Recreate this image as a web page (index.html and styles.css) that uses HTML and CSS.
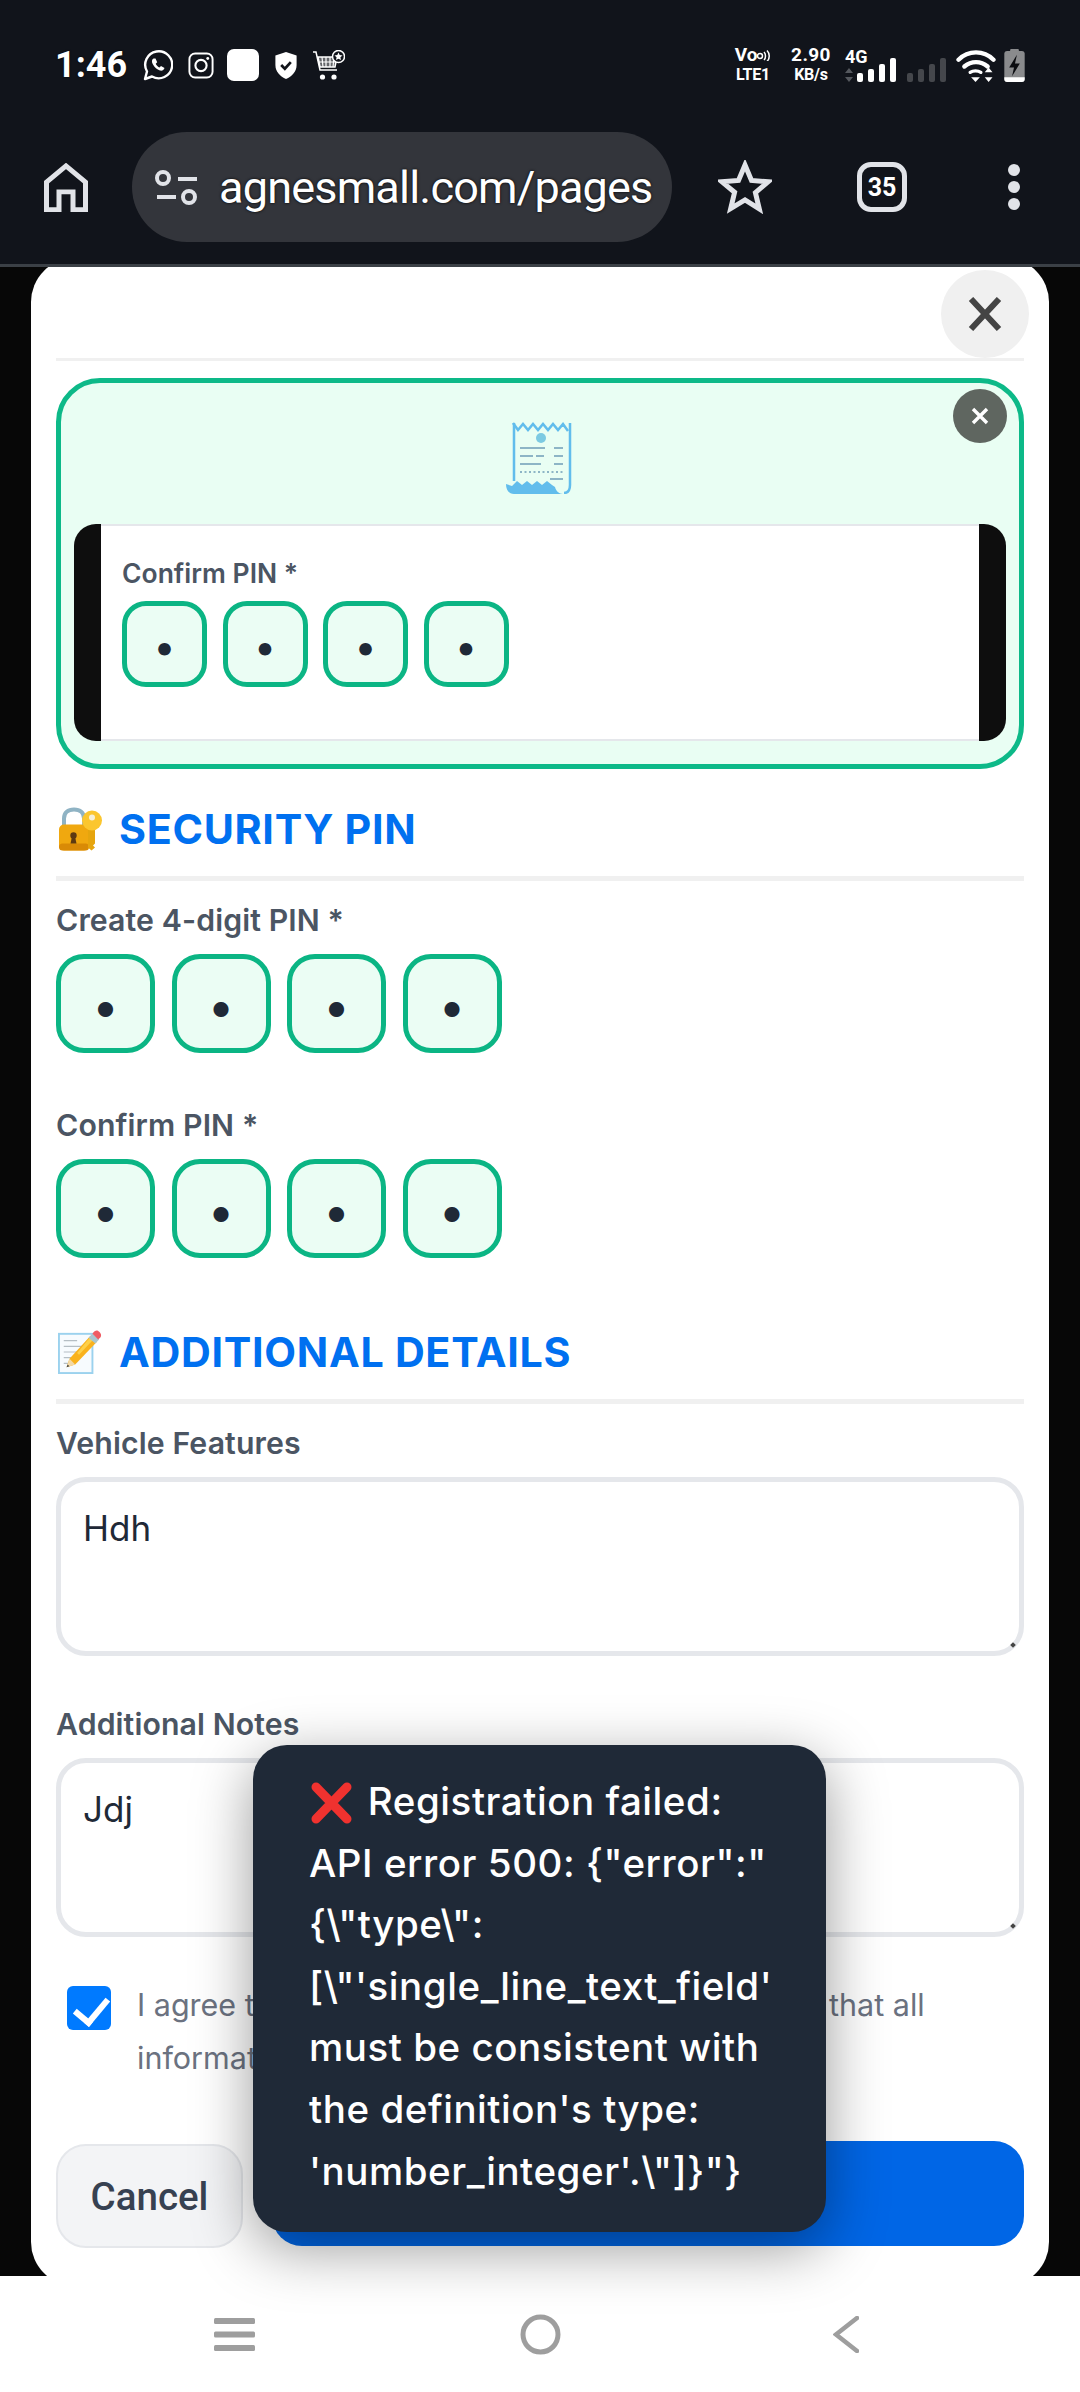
FILE: index.html
```html
<!DOCTYPE html>
<html lang="en">
<head>
    <meta charset="UTF-8">
    <meta name="viewport" content="width=device-width, initial-scale=1.0">
    <title>Registration</title>
    <link rel="stylesheet" href="styles.css">
</head>
<body>
<div class="phone">
    <div class="chrome">
        <div class="status">
            <span class="time">1:46</span>
            <svg class="ic-whatsapp" viewBox="0 0 30 31" fill="none" stroke="#fff" stroke-width="2.4"><path d="M2 29l2-7.5A13.5 13.5 0 1 1 9 26.500z" stroke-linejoin="round"/><path d="M10.500 8.500c-2 1-2 3.500-.5 6 1.500 2.800 4 5 7 6 2 .5 4-.5 4.500-2.500l-3.500-2-1.500 1.500c-1.500-.7-3-2.200-3.800-3.800l1.500-1.500-1.700-3.700z" fill="#fff" stroke="none"/></svg>
            <svg class="ic-insta" viewBox="0 0 26 28" fill="none" stroke="#fff" stroke-width="2"><rect x="1" y="1.500" width="24" height="25" rx="6"/><circle cx="13" cy="14" r="5.800" stroke-width="2.200"/><circle cx="20" cy="6.800" r="1.500" fill="#fff" stroke="none"/></svg>
            <span class="app-square"></span>
            <svg class="ic-shield" viewBox="0 0 22 28"><path d="M11 0l11 3.500v10c0 7-5 12-11 14.500C5 25.500 0 20.500 0 13.500v-10z" fill="#fff"/><path d="M6 13.500l3.800 3.800L16 10.500" fill="none" stroke="#11141b" stroke-width="2.800"/></svg>
            <svg class="ic-cart" viewBox="0 0 32 30" fill="none" stroke="#fff"><path d="M0 2h3l4 18h17" stroke-width="1.500"/><path d="M5 7h19l-2 10H7z" fill="#fff" fill-opacity=".35" stroke-width="1.500"/><path d="M9 7l1 10M13 7v10M17 7v10M21 7l-1 10M6 12h17" stroke-width="1.200"/><circle cx="9.500" cy="27" r="2.600" fill="#fff" stroke="none"/><circle cx="21" cy="27" r="2.600" fill="#fff" stroke="none"/><circle cx="25.500" cy="6.500" r="6" fill="#11141b" stroke-width="1.500"/><path d="M25.500 2.500l1.200 2.600 2.800.3-2.100 1.900.6 2.800-2.500-1.400-2.500 1.400.6-2.800-2.100-1.900 2.800-.3z" fill="#fff" stroke="none"/></svg>
            <span class="status-gap"></span>
            <div class="net-type"><span class="volte">Vo<svg viewBox="0 0 14 12" fill="none" stroke="#fff" stroke-width="1.500"><circle cx="3" cy="7" r="2.500"/><path d="M7 3c2 2 2 6 0 8M10 1.500c3 3 3 8 0 11"/></svg></span><span>LTE1</span></div>
            <div class="net-speed"><span class="speed-num">2.90</span><span>KB/s</span></div>
            <div class="signal-wrap">
                <span class="four-g">4G</span>
                <svg class="arrows" viewBox="0 0 8 14" fill="#55585e"><path d="M4 0l4 5H0zM4 14L0 9h8z"/></svg>
                <div class="bars"><i class="b1"></i><i class="b2"></i><i class="b3"></i><i class="b4"></i></div>
            </div>
            <div class="bars dim"><i class="b1"></i><i class="b2"></i><i class="b3"></i><i class="b4"></i></div>
            <svg class="ic-wifi" viewBox="0 0 40 34" fill="none" stroke="#fff" stroke-width="4.500" stroke-linecap="round"><path d="M2 11c10-10 26-10 36 0"/><path d="M8 18c7-6 17-6 24 0"/><path d="M14 24c3-2 8-2 11 0" stroke-width="3.500"/><path d="M15 29h9l-4.500 5z" fill="#fff" stroke="none"/><path d="M33 19l4 5h-8zM33 34l-4-5h8z" fill="#fff" stroke="none"/></svg>
            <svg class="ic-batt" viewBox="0 0 21 34"><rect x="0" y="2" width="21" height="32" rx="3" fill="#8a8b8d"/><rect x="6" y="0" width="9" height="3" rx="1" fill="#8a8b8d"/><path d="M0 29h21v2a3 3 0 0 1-3 3H3a3 3 0 0 1-3-3z" fill="#fff"/><path d="M13 6l-8 13h5l-2 9 8-13h-5z" fill="#0b0c10"/></svg>
        </div>
        <div class="toolbar">
            <svg class="ic-home" viewBox="0 0 44 51" preserveAspectRatio="none" fill="none" stroke="#e1e3e8" stroke-width="5"><path d="M2.500 48.500V20L22 3l19.500 17v28.500H29V30H15v18.500z"/></svg>
            <div class="url-pill">
                <svg class="ic-tune" viewBox="0 0 42 35" fill="none" stroke="#e1e3e8" stroke-width="4"><circle cx="8" cy="8" r="6"/><path d="M23 9h19M2 27h19"/><circle cx="34" cy="27" r="6"/></svg>
                <span class="url">agnesmall.com/pages</span>
            </div>
            <svg class="ic-star" viewBox="0 0 54 54" fill="none" stroke="#e1e3e8" stroke-width="5"><path d="M27 5l6.500 15.500 16.500 1.300-12.600 10.800 3.900 16.300L27 39.900l-14.300 8.700 3.900-16.300L4 21.800l16.500-1.300z"/></svg>
            <div class="tabs">35</div>
            <div class="dots"><i></i><i></i><i></i></div>
        </div>
    </div>

    <div class="backdrop">
        <div class="card">
            <div class="card-head">
                <button class="close-btn">
                    <svg viewBox="0 0 34 34" stroke="#444" stroke-width="6"><path d="M3 2l28 30M31 2L3 32"/></svg>
                </button>
            </div>

            <div class="scan-box">
                <button class="scan-close">
                    <svg viewBox="0 0 18 18" stroke="#fff" stroke-width="3.400"><path d="M2 2l14 14M16 2L2 16"/></svg>
                </button>
                <svg class="receipt" viewBox="0 0 66 72" fill="none">
                    <path d="M8 1v58M64 1v62c0 5-2 8-6 8" stroke="#62bdec" stroke-width="2.500"/>
                    <path d="M7 1l5 7 5-6 5 6 5-6 5 6 5-6 5 6 5-6 5 6 5-6 5 7" stroke="#62bdec" stroke-width="2.500"/>
                    <path d="M0 62l6 2 5-5 5 4 5-4 5 4 5-4 5 4 5-4 5 4 3 2c1 4 4 7 8 7H8c-5 0-8-4-8-10z" fill="#62bdec"/>
                    <circle cx="35" cy="16" r="5" fill="#7ccae2"/>
                    <path d="M14 26h25M48 26h9M14 34h13M30 34h8M48 34h9M14 42h21M48 42h9M44 57h13" stroke="#8db5c6" stroke-width="2"/>
                    <path d="M14 50h44" stroke="#8db5c6" stroke-width="2" stroke-dasharray="2 2.500"/>
                </svg>
                <div class="scan-shot">
                    <div class="scan-page">
                        <div class="scan-label">Confirm PIN *</div>
                        <div class="pin-row small">
                            <div class="pin">•</div><div class="pin">•</div><div class="pin">•</div><div class="pin">•</div>
                        </div>
                    </div>
                </div>
            </div>

            <h3 class="section-title first">
                <svg class="emoji" viewBox="0 0 44 43"><path d="M6 19V11C6 5 10 2 16 2s10 3 10 9v8" fill="none" stroke="#8fb3c4" stroke-width="4"/><rect x="1" y="17" width="30" height="26" rx="5" fill="#f0a80f"/><rect x="1" y="36" width="30" height="7" rx="3.500" fill="#d98a06"/><circle cx="15.500" cy="28" r="3.200" fill="#5d3a12"/><path d="M14 29h3l1.500 7h-6z" fill="#5d3a12"/><path d="M30 20h7v16l-2 2 2 2-3.500 3-3.500-3z" fill="#e6a50e"/><circle cx="34" cy="13" r="10" fill="#fbc62e"/><circle cx="34" cy="10" r="3" fill="#f6f0d8"/></svg>
                SECURITY PIN
            </h3>

            <label class="field-label">Create 4-digit PIN *</label>
            <div class="pin-row">
                <div class="pin">•</div><div class="pin">•</div><div class="pin">•</div><div class="pin">•</div>
            </div>

            <label class="field-label spaced">Confirm PIN *</label>
            <div class="pin-row">
                <div class="pin">•</div><div class="pin">•</div><div class="pin">•</div><div class="pin">•</div>
            </div>

            <h3 class="section-title">
                <svg class="emoji" viewBox="0 0 46 46"><rect x="1" y="4" width="35" height="41" fill="#f7fbfe" stroke="#9bd2ee" stroke-width="2"/><path d="M6 11h14M6 17h22M6 23h20M6 29h13M6 35h9" stroke="#b5bec4" stroke-width="1.300"/><path d="M9 39l3-9L34 6l7 6-23 24z" fill="#f9b21d"/><path d="M20 24l14-17 3 3-15 16z" fill="#fdd04a"/><path d="M9 39l3-9 6 6z" fill="#f3d9a6"/><path d="M9 39l1-3 2 2z" fill="#444"/><path d="M32 8l4-4 7 6-4 4z" fill="#a9c6cf"/><path d="M36 4c2-3 4-4 6-3 3 2 4 5 2 7l-2 2z" fill="#ef5b62"/></svg>
                ADDITIONAL DETAILS
            </h3>

            <label class="field-label">Vehicle Features</label>
            <div class="area-wrap"><textarea class="area">Hdh</textarea></div>

            <label class="field-label notes">Additional Notes</label>
            <div class="area-wrap"><textarea class="area">Jdj</textarea></div>

            <div class="agree">
                <input type="checkbox" class="agree-box" checked>
                <span class="agree-text">I agree to the terms and conditions and confirm that all information provided is accurate</span>
            </div>

            <div class="actions">
                <button class="btn-cancel">Cancel</button>
                <button class="btn-submit">Register</button>
            </div>
        </div>
    </div>

    <div class="navbar">
        <svg class="nav-menu" viewBox="0 0 41 33" fill="#9e9e9e"><rect width="41" height="6" rx="1.500"/><rect y="13.500" width="41" height="6" rx="1.500"/><rect y="27" width="41" height="6" rx="1.500"/></svg>
        <svg class="nav-home" viewBox="0 0 41 41" fill="none" stroke="#9e9e9e" stroke-width="5"><circle cx="20.500" cy="20.500" r="17.500"/></svg>
        <svg class="nav-back" viewBox="0 0 26 37" fill="none" stroke="#9e9e9e" stroke-width="4.500" stroke-linecap="round"><path d="M24 2L3 18.500 24 35"/></svg>
    </div>

    <div class="toast">
        <svg class="toast-x" viewBox="0 0 45 42" stroke="#f0322f" stroke-width="9" stroke-linecap="round"><path d="M7 5l31 32M38 5L7 37"/></svg> Registration failed:<br>API error 500: {"error":"<br>{\"type\":<br>[\"'single_line_text_field'<br>must be consistent with<br>the definition's type:<br>'number_integer'.\"]}"}
    </div>
</div>
</body>
</html>
```

FILE: styles.css
```css
* {
    box-sizing: border-box;
}

body {
    margin: 0;
    font-family: Inter, "Noto Sans", sans-serif;
    background-color: #000;
}

.phone {
    position: relative;
    width: 1080px;
    height: 2392px;
    display: flex;
    flex-direction: column;
    overflow: hidden;
}

/* phone status bar + browser toolbar */
.chrome {
    background-color: #11141b;
    border-bottom: 3px solid #3b4046;
    flex: none;
}

.status {
    height: 130px;
    display: flex;
    align-items: center;
    padding: 0 55px 0 55px;
    color: #fff;
    font-family: Roboto, sans-serif;
}

.time {
    font-size: 36px;
    font-weight: 700;
    width: 88px;
    text-shadow: 0 0 2px #000;
}

.ic-whatsapp { width: 30px; height: 31px; margin-right: 15px; }
.ic-insta { width: 26px; height: 27px; margin-right: 13px; }
.app-square { width: 32px; height: 32px; background-color: #fff; border-radius: 7px; margin-right: 16px; }
.ic-shield { width: 22px; height: 27px; margin-right: 16px; }
.ic-cart { width: 32px; height: 30px; }
.status-gap { flex: 1; }

.net-type, .net-speed {
    display: flex;
    flex-direction: column;
    align-items: center;
    font-size: 16px;
    font-weight: 700;
    line-height: 20px;
    letter-spacing: -.2px;
}

.net-type { width: 42px; margin-right: 16px; }
.net-type .volte { display: flex; align-items: center; font-size: 19px; }
.net-type .volte svg { width: 14px; height: 12px; }
.net-speed { width: 42px; margin-right: 13px; }
.speed-num { font-size: 19px; letter-spacing: .4px; }

.signal-wrap {
    position: relative;
    width: 51px;
    height: 33px;
    display: flex;
    align-items: flex-end;
    justify-content: space-between;
    margin-right: 11px;
}

.four-g { position: absolute; left: 0; top: 0; font-size: 18px; font-weight: 700; line-height: 16px; }
.arrows { width: 8px; height: 14px; }

.bars {
    display: flex;
    align-items: flex-end;
    gap: 5px;
    height: 24px;
}

.bars i { display: block; width: 6px; background-color: #fff; border-radius: 2px; }
.bars .b1 { height: 9px; }
.bars .b2 { height: 13px; }
.bars .b3 { height: 18px; }
.bars .b4 { height: 24px; }
.bars.dim { margin-right: 10px; height: 33px; }
.bars.dim i { background-color: #45474c; }

.ic-wifi { width: 40px; height: 33px; margin-right: 8px; }
.ic-batt { width: 21px; height: 33px; }

.toolbar {
    height: 134px;
    display: flex;
    align-items: center;
    padding: 0 60px 20px 44px;
}

.ic-home { width: 44px; height: 49px; margin-right: 44px; }

.url-pill {
    width: 540px;
    height: 110px;
    border-radius: 55px;
    background-color: #33353b;
    display: flex;
    align-items: center;
    padding-left: 23px;
    margin-right: 46px;
}

.ic-tune { width: 42px; height: 35px; margin-right: 22px; }

.url {
    font-family: Roboto, sans-serif;
    font-size: 45px;
    letter-spacing: -.8px;
    color: #fff;
    white-space: nowrap;
    text-shadow: 0 0 3px #000;
}

.ic-star { width: 54px; height: 54px; margin-right: 85px; }

.tabs {
    width: 50px;
    height: 50px;
    border: 5px solid #e1e3e8;
    border-radius: 14px;
    color: #fff;
    font-family: Roboto, sans-serif;
    font-size: 25px;
    font-weight: 700;
    display: flex;
    align-items: center;
    justify-content: center;
    margin-right: 101px;
}

.dots {
    display: flex;
    flex-direction: column;
    gap: 5px;
}

.dots i {
    display: block;
    width: 12px;
    height: 12px;
    border-radius: 50%;
    background-color: #e1e3e8;
}

/* modal */
.backdrop {
    flex: 1;
    min-height: 0;
    background-color: #070707;
    overflow: hidden;
}

.card {
    background-color: #fff;
    margin: -9px 31px 0;
    height: 2028px;
    border-radius: 44px;
    padding: 12px 25px 0;
}

.card-head {
    display: flex;
    justify-content: flex-end;
    border-bottom: 3px solid #f0f0f0;
    height: 91px;
    margin-bottom: 17px;
}

.close-btn {
    width: 88px;
    height: 88px;
    flex: none;
    border: none;
    border-radius: 50%;
    background-color: #f0f0f0;
    margin-right: -5px;
    padding: 0;
    display: flex;
    align-items: center;
    justify-content: center;
}

.close-btn svg { width: 34px; height: 34px; }

.scan-box {
    position: relative;
    height: 391px;
    border: 5px solid #0db988;
    border-radius: 44px;
    background-color: #e9fef3;
    padding: 39px 13px 0;
}

.scan-close {
    position: absolute;
    top: 6px;
    right: 12px;
    width: 54px;
    height: 54px;
    border: none;
    border-radius: 50%;
    background-color: #5f6660;
    padding: 0;
    display: flex;
    align-items: center;
    justify-content: center;
}

.scan-close svg { width: 18px; height: 18px; }

.receipt {
    display: block;
    width: 66px;
    height: 72px;
    margin: 0 auto 30px;
    transform: translateX(-1px);
}

.scan-shot {
    height: 217px;
    padding: 0 27px;
    background-color: #0e0e0e;
    border-radius: 22px;
}

.scan-page {
    height: 100%;
    background-color: #fff;
    border-top: 2px solid #e5e7eb;
    border-bottom: 2px solid #e5e7eb;
    padding: 32px 21px 0;
}

.scan-label {
    font-size: 26.500px;
    font-weight: 600;
    color: #4b5563;
    line-height: 30px;
    margin-bottom: 13px;
}

.pin-row {
    display: flex;
    gap: 16.500px;
}

.pin-row.small { gap: 15.500px; }

.pin {
    width: 99px;
    height: 99px;
    border: 5.500px solid #0bb584;
    border-radius: 28px;
    background-color: #ebfdf4;
    color: #1f2937;
    font-size: 48px;
    line-height: 1;
    display: flex;
    align-items: center;
    justify-content: center;
    padding-top: 5px;
}

.pin-row.small .pin {
    width: 85px;
    height: 86px;
    border-width: 5px;
    border-radius: 24px;
    font-size: 40px;
}

.section-title {
    display: flex;
    align-items: center;
    gap: 17px;
    height: 77px;
    margin: 69px 0 22px;
    padding-bottom: 22px;
    border-bottom: 5px solid #f0f0f0;
    color: #0070f0;
    font-size: 41.250px;
    font-weight: 700;
    letter-spacing: .7px;
    line-height: 50px;
}

.section-title.first { margin-top: 35px; }

.emoji { width: 44px; height: 44px; flex: none; margin-left: 2px; }

.field-label {
    display: block;
    font-size: 30.250px;
    font-weight: 600;
    letter-spacing: .1px;
    color: #4b5563;
    line-height: 34px;
    margin-bottom: 17px;
}

.field-label.spaced { margin-top: 55px; }
.field-label.notes { margin-top: 51px; }

.area-wrap {
    position: relative;
    height: 179px;
}

/* the little grip that is left of the resize handle */
.area-wrap::after {
    content: "";
    position: absolute;
    right: 9px;
    bottom: 9px;
    width: 4px;
    height: 4px;
    background-color: #444;
    transform: rotate(45deg);
}

.area {
    display: block;
    width: 100%;
    height: 100%;
    border: 5px solid #e5e7eb;
    border-radius: 30px;
    padding: 24px 22px;
    font-family: Inter, sans-serif;
    font-size: 35px;
    line-height: 44px;
    color: #1f2937;
    background-color: #fff;
    resize: none;
    outline: none;
}

.agree {
    display: flex;
    gap: 26px;
    margin: 49px 0 0 11px;
}

.agree-box {
    appearance: none;
    position: relative;
    width: 44px;
    height: 44px;
    margin: 0;
    flex: none;
    background-color: #007aff;
    border-radius: 6px;
}

.agree-box::after {
    content: "";
    position: absolute;
    left: 14px;
    top: 5px;
    width: 15px;
    height: 27px;
    border-right: 6px solid #fff;
    border-bottom: 6px solid #fff;
    transform: rotate(40deg);
}

.agree-text {
    font-size: 30.500px;
    line-height: 53px;
    color: #6b7280;
    margin-top: -8px;
    width: 800px;
}

.actions {
    display: flex;
    gap: 29px;
    align-items: flex-start;
    margin-top: 57px;
}

.btn-cancel {
    width: 187px;
    height: 104px;
    margin-top: 3px;
    border: 2px solid #e5e7eb;
    border-radius: 30px;
    background-color: #f3f4f6;
    color: #374151;
    font-family: Roboto, sans-serif;
    font-size: 38.500px;
    font-weight: 500;
    padding: 0;
}

.btn-submit {
    flex: 1;
    height: 105px;
    border: none;
    border-radius: 30px;
    background-color: #0066e6;
    color: #fff;
    font-family: Roboto, sans-serif;
    font-size: 38.500px;
    font-weight: 500;
}

.navbar {
    flex: none;
    height: 116px;
    background-color: #fff;
    position: relative;
    display: flex;
    align-items: center;
    padding: 0 221px 0 214px;
    justify-content: space-between;
}

.nav-menu { width: 41px; height: 33px; }
.nav-home { width: 41px; height: 41px; margin-right: 7px; }
.nav-back { width: 26px; height: 37px; }

/* error toast sits over the form */
.toast {
    position: absolute;
    left: 253px;
    top: 1745px;
    width: 573px;
    height: 487px;
    padding: 26px 0 0 56px;
    background-color: #1f2937;
    border-radius: 34px;
    box-shadow: 0 16px 60px rgba(0, 0, 0, 0.4);
    color: #fff;
    font-size: 38.500px;
    font-weight: 500;
    letter-spacing: .55px;
    line-height: 61.600px;
    white-space: nowrap;
}

.toast-x {
    width: 45px;
    height: 42px;
    vertical-align: -9px;
    margin-right: 3px;
}
```
